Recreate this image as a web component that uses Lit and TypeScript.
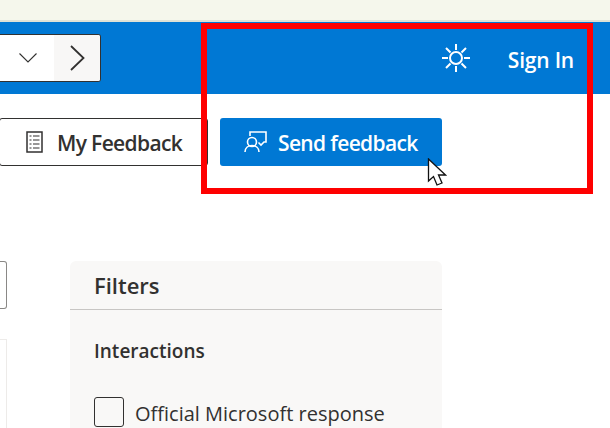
import { LitElement, html, css } from 'lit';
import { customElement } from 'lit/decorators.js';

@customElement('app-root')
export class AppRoot extends LitElement {
  static styles = css`
    :host {
      display: block;
      position: relative;
      width: 610px;
      height: 428px;
      overflow: hidden;
      background: #fff;
      font-family: 'Open Sans', 'Noto Sans', sans-serif;
      color: #323130;
    }
    .browser-strip {
      height: 20px;
      background: #f5f7ec;
      border-bottom: 2px solid #dfe2d6;
    }
    .header {
      height: 72px;
      background: #0078d4;
      display: flex;
      align-items: center;
      padding-right: 36px;
    }
    .pager {
      width: 101px;
      height: 48px;
      box-sizing: border-box;
      display: flex;
      background: #fff;
      border: 1px solid #323130;
      border-left: 0;
      border-radius: 0 3px 3px 0;
    }
    .pager-select {
      flex: 1;
      display: flex;
      align-items: center;
      justify-content: flex-end;
      padding-right: 16px;
    }
    .pager-next {
      width: 46px;
      display: flex;
      align-items: center;
      justify-content: center;
      background: #f8f7f6;
      border-radius: 0 2px 2px 0;
    }
    .spacer {
      flex: 1;
    }
    .sun {
      display: block;
      margin-right: 37px;
    }
    .sign-in {
      color: #fff;
      font-size: 21px;
      font-weight: 600;
      letter-spacing: -0.2px;
      line-height: 28px;
      padding-top: 3px;
    }
    .toolbar {
      display: flex;
      gap: 12px;
      padding-top: 24px;
    }
    .btn {
      height: 48px;
      box-sizing: border-box;
      display: flex;
      align-items: center;
      font-size: 21px;
      font-weight: 600;
      letter-spacing: -0.65px;
      border-radius: 3px;
    }
    .btn span {
      padding-top: 2px;
    }
    .btn-outline {
      width: 209px;
      margin-left: -1px;
      background: #fff;
      border: 1px solid #323130;
      padding-left: 26px;
      gap: 14px;
    }
    .btn-primary {
      width: 222px;
      background: #0078d4;
      color: #fff;
      padding-left: 24px;
      gap: 11px;
    }
    .content {
      display: flex;
      gap: 63px;
      padding-top: 95px;
    }
    .side {
      width: 7px;
      flex: none;
    }
    .search-end {
      height: 48px;
      box-sizing: border-box;
      border: 1px solid #8a8886;
      border-left: 0;
      border-radius: 0 3px 3px 0;
    }
    .list-end {
      height: 120px;
      margin-top: 30px;
      box-sizing: border-box;
      border: 1px solid #edebe9;
      border-left: 0;
    }
    .filters {
      width: 372px;
      height: 200px;
      background: #f9f8f7;
      border-radius: 6px 6px 0 0;
    }
    .filters-title {
      height: 49px;
      box-sizing: border-box;
      padding: 9px 24px 0;
      border-bottom: 1px solid #c8c6c4;
      font-size: 22px;
      font-weight: 600;
      line-height: 30px;
    }
    .filters-group {
      padding: 28px 24px 0;
      font-size: 19px;
      font-weight: 600;
      line-height: 26px;
    }
    .check-row {
      display: flex;
      align-items: flex-start;
      gap: 11px;
      padding: 33px 24px 0;
      font-size: 20px;
      line-height: 30px;
    }
    .check-row span {
      padding-top: 2px;
    }
    .box {
      width: 30px;
      height: 30px;
      box-sizing: border-box;
      border: 1px solid #323130;
      border-radius: 3px;
    }
    .annotation {
      position: absolute;
      left: 201px;
      top: 23px;
      width: 392px;
      height: 171px;
      box-sizing: border-box;
      border: 6px solid #fe0000;
      pointer-events: none;
    }
    .cursor {
      position: absolute;
      left: 427px;
      top: 158px;
    }
  `;

  render() {
    return html`
      <div class="browser-strip"></div>
      <div class="header">
        <div class="pager">
          <div class="pager-select">
            <svg width="20" height="12" viewBox="0 0 20 12" fill="none" stroke="#323130" stroke-width="1.100">
              <path d="M1.500 1.500 10 10l8.500-8.500" />
            </svg>
          </div>
          <div class="pager-next">
            <svg width="16" height="26" viewBox="0 0 16 26" fill="none" stroke="#323130" stroke-width="1.800">
              <path d="M2 1l12.500 12L2 25" />
            </svg>
          </div>
        </div>
        <div class="spacer"></div>
        <svg class="sun" width="30" height="30" viewBox="0 0 30 30" fill="none" stroke="#fff" stroke-width="2">
          <circle cx="15" cy="15" r="6" />
          <path d="M15 1v6M15 23v6M1 15h6M23 15h6M5 5l4.500 4.500M20.500 20.500 25 25M25 5l-4.500 4.500M9.500 20.500 5 25" />
        </svg>
        <span class="sign-in">Sign In</span>
      </div>
      <div class="toolbar">
        <div class="btn btn-outline">
          <svg width="17" height="22" viewBox="0 0 17 22" fill="none" stroke="#323130" stroke-width="1.500">
            <rect x="1" y="1" width="15" height="20" />
            <path d="M3.500 5h2M7 5h6.500M3.500 9h2M7 9h6.500M3.500 13h2M7 13h6.500M3.500 17h2M7 17h6.500" stroke-width="1.200" />
          </svg>
          <span>My Feedback</span>
        </div>
        <div class="btn btn-primary">
          <svg width="23" height="22" viewBox="0 0 23 22" fill="none" stroke="#fff" stroke-width="1.600">
            <path d="M6 5V1h16v10h-2l-3 3-2.500-2.500" />
            <circle cx="8" cy="11" r="4.500" />
            <path d="M1 21c0-4 3-6.500 7-6.500s7 2.500 7 6.500" />
          </svg>
          <span>Send feedback</span>
        </div>
      </div>
      <div class="content">
        <div class="side">
          <div class="search-end"></div>
          <div class="list-end"></div>
        </div>
        <div class="filters">
          <div class="filters-title">Filters</div>
          <div class="filters-group">Interactions</div>
          <div class="check-row">
            <div class="box"></div>
            <span>Official Microsoft response</span>
          </div>
        </div>
      </div>
      <div class="annotation"></div>
      <svg class="cursor" width="20" height="30" viewBox="0 0 20 30">
        <path d="M1.500 1v22l5-4.500 3.500 8.500 5-2-3.500-8h7z" fill="#fff" stroke="#111" stroke-width="1.300" />
      </svg>
    `;
  }
}
